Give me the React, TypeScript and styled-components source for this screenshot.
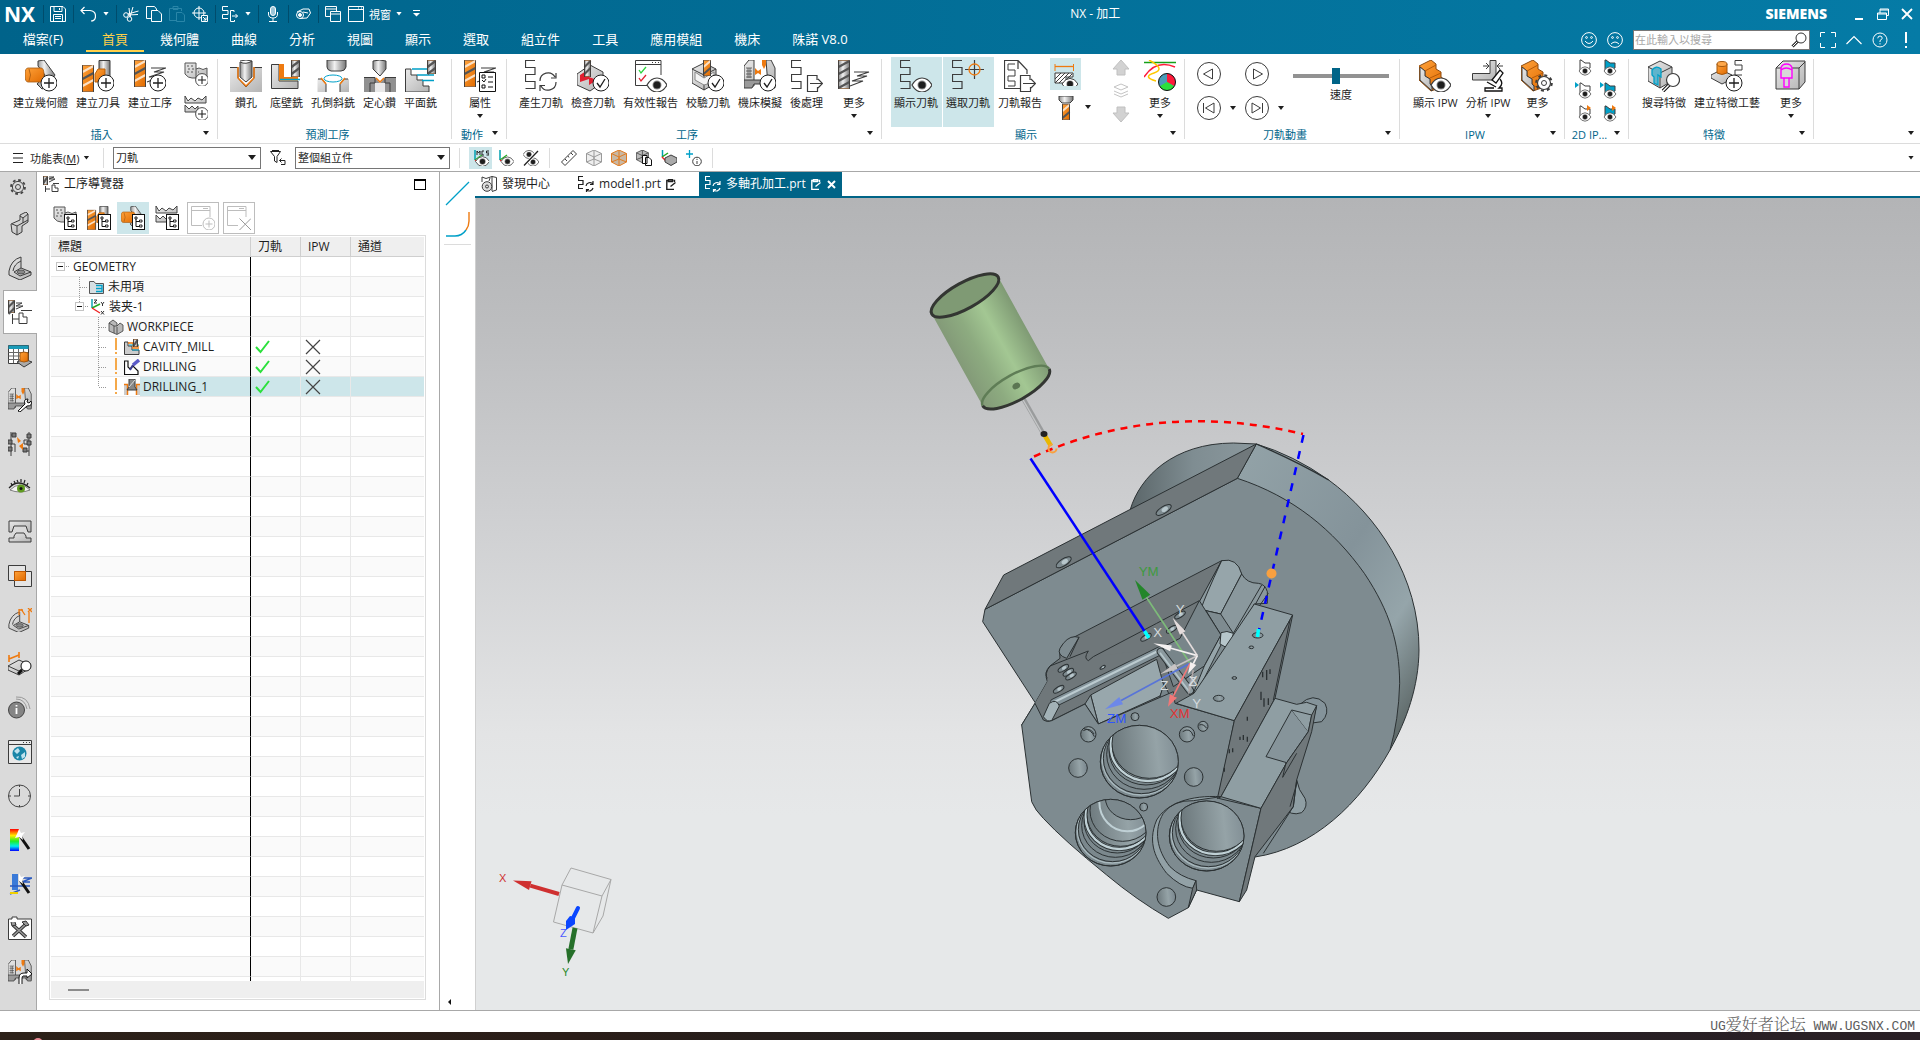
import React from 'react';
import styled, { createGlobalStyle, css } from 'styled-components';

const INK = '#3c3c3c';
const OR = '#ee7a10';
const CY = '#00a0c8';

const Global = createGlobalStyle`
  *, *::before, *::after { box-sizing: border-box; }
  html, body, #root { height: 100%; }
  body { margin: 0; overflow: hidden; background: #fff; }
  body, button, input, select, table {
    font-family: "Open Sans", "Noto Sans CJK TC", "Noto Sans", sans-serif;
    font-size: 12px; color: #1e1e1e;
  }
  button { border: 0; padding: 0; background: none; cursor: default; white-space: nowrap; }
  svg { display: block; flex: none; }
  h1, h2 { margin: 0; font-weight: 400; }
`;

/* ---------- shared drawing parts ---------- */
const Defs = styled.svg`position: absolute; width: 0; height: 0;`;

const Gradients = () => (
  <Defs aria-hidden="true">
    <defs>
      <linearGradient id="gOr" x1="0" x2="1" y1="0" y2="1"><stop offset="0" stopColor="#ffa23a" /><stop offset="1" stopColor="#e06a00" /></linearGradient>
      <linearGradient id="gGr" x1="0" x2="1" y1="0" y2="1"><stop offset="0" stopColor="#e9e9e9" /><stop offset="1" stopColor="#b4b4b4" /></linearGradient>
      <linearGradient id="gMe" x1="0" x2="1"><stop offset="0" stopColor="#8d8d8d" /><stop offset=".4" stopColor="#f2f2f2" /><stop offset="1" stopColor="#767676" /></linearGradient>
      <linearGradient id="gRain" x1="0" x2="0" y1="0" y2="1"><stop offset="0" stopColor="#f00" /><stop offset=".3" stopColor="#fe0" /><stop offset=".55" stopColor="#2e2" /><stop offset=".78" stopColor="#0ee" /><stop offset="1" stopColor="#00f" /></linearGradient>
    </defs>
  </Defs>
);

type P = { x?: number; y?: number; s?: number };
const At = ({ x = 0, y = 0, s = 1, children }: P & { children: React.ReactNode }) => (
  <g transform={`translate(${x} ${y}) scale(${s})`}>{children}</g>
);
const Plus = (p: P) => <At {...p}><circle r="8" fill="#fff" stroke="#1e1e1e" /><path d="M-5 0H5M0 -5V5" stroke="#1e1e1e" strokeWidth="1.3" /></At>;
const Check = (p: P) => <At {...p}><circle r="8" fill="#fff" stroke="#1e1e1e" /><path d="M-4 0L-1 4L4 -4" fill="none" stroke="#1e1e1e" strokeWidth="1.3" /></At>;
const Eye = (p: P) => <At {...p}><path d="M-10 0Q-6 -7 0 -7T10 0Q6 7 0 7T-10 0Z" fill="#fff" stroke={INK} strokeWidth="1.2" /><circle r="4.5" fill="#8a8a8a" /><circle r="3.6" fill="#1e1e1e" /></At>;
const Tree = (p: P) => <At {...p}><rect width="12" height="15" fill="#fff" stroke="#111" /><path d="M3.5 4V12H7M3.5 7H7" fill="none" stroke="#111" /><path d="M2.500 2.500h2v2h-2zM7 5.500h2.500v2h-2.500zM7 10.500h2.500v2h-2.500z" fill="#fff" stroke="#111" strokeWidth=".9" /></At>;
const Zig = (p: P) => <At {...p}><path d="M10 .5H.5V7.500H10V14.500H.5V21.500H10V28.500H.5" fill="none" stroke={INK} strokeWidth="1.2" /></At>;
const Mill = ({ w = 12, h = 27, c = 'url(#gOr)', lc = '#fbe0c4', ...p }: P & { w?: number; h?: number; c?: string; lc?: string }) => (
  <At {...p}>
    <rect x=".5" y=".5" width={w - 1} height={h - 1} fill={c} stroke="#7b4a20" strokeWidth=".7" />
    {Array.from({ length: Math.floor((h - w * 0.6) / 7) + 1 }, (_, i) => (
      <path key={i} d={`M.5 ${7 + i * 7}L${w - 0.5} ${1 + i * 7}`} stroke={i % 2 ? '#555' : lc} strokeWidth="2.200" />
    ))}
    <path d={`M.5 .5V${h}M${w - 0.5} .5V${h}`} stroke={INK} strokeWidth=".9" />
  </At>
);
const GMill = (p: P & { w?: number; h?: number }) => <Mill {...p} c="url(#gMe)" lc="#555" />;
const Swoosh = (p: P) => <At {...p}><path d="M4 1H19L7 5H17L2 10H13L0 15" fill="none" stroke={INK} strokeWidth="1.100" /></At>;
const Refresh = (p: P) => <At {...p}><path d="M0 8A8 8 0 0 1 15 4M16 0V5H11M16 9A8 8 0 0 1 1 13M0 18V12.500H5" fill="none" stroke={INK} strokeWidth="1.200" /></At>;
const Export = (p: P) => <At {...p}><path d="M10 5V.5H.5V16.500H10.500V12M3 8.500H15M11 4L15.500 8.500L11 13" fill="none" stroke={INK} strokeWidth="1.200" /></At>;
const Cube = ({ f = 'url(#gGr)', ...p }: P & { f?: string }) => (
  <At {...p}><path d="M12 0L24 6V20L12 27L0 20V6Z" fill={f} stroke={INK} /><path d="M0 6L12 12L24 6M12 12V27" fill="none" stroke={INK} /></At>
);
const Steps = () => (
  <g strokeLinejoin="round"><path d="M0 6L12 0L17 4V9L22 12V17L26 20V26L12 31L0 20Z" fill="url(#gOr)" stroke="#8a4b12" /><path d="M0 6L6 11V16L11 19V24L15 27M6 11L17 5M11 18L22 13M0 6V19L13 31" fill="none" stroke="#b45a08" /><path d="M1 7L6 11V16L11 19V24L13 26V31L1 20Z" fill="url(#gGr)" stroke={INK} /></g>
);
const Machine = (
  <g><path d="M0 26V6L5 0H10V26ZM22 0H27L31 8V26H24Z" fill="url(#gGr)" stroke={INK} /><path d="M0 20H31V28H26L24 24H10L8 28H0Z" fill="#9a9a9a" stroke={INK} /><path d="M2 8H8M2 11H8M2 14H8M2 17H8M4 8V18M6 8V18" stroke={INK} strokeWidth=".7" /><path d="M11 8L14 11L17 9V15L14 13L11 15ZM18 0H22V5L20 9L18 5Z" fill={OR} /></g>
);
const Cyl = (
  <g><path d="M13 1L19 0L30 15L23 26L17 29L12 24L20 15L13 6Z" fill="url(#gMe)" stroke={INK} /><path d="M3 8H16Q19 8 19 15T16 22H3Q0 22 0 15T3 8Z" fill="url(#gOr)" stroke="#a3580f" strokeWidth=".8" /><path d="M4 9Q7 15 4 21" fill="none" stroke="#a3580f" strokeWidth=".8" /></g>
);
const ToolSet = <g><Mill y={5} w={12} h={27} /><path d="M17 .5H28V16H17Z" fill="url(#gMe)" stroke={INK} /><path d="M13 14L16 9H23V18H18V22H13Z" fill="url(#gOr)" stroke="#b8600a" /></g>;
const Blocks = <g><path d="M1 1H12V7L15 6Q19 9 23 6V19Q19 21 15 18L12 16H8Q4 16 1 12Z" fill="url(#gGr)" stroke="#555" /><path d="M12 7V17M3 4H5M7 4H9M4 7H6M8 7H10M3 10H5M7 10H9M14 10H15" stroke="#555" /></g>;
const Waves = <g><path d="M1 0V7H22V0L18 4L14 2L11 5L7 2L4 5ZM1 9V16H14V10L11 13L8 10L5 13Z" fill="url(#gGr)" stroke="#444" /></g>;
const Bracket = <g><path d="M1 15Q3 4 13 1V12L23 16V19L12 24L1 19Z" fill="url(#gGr)" stroke={INK} /><path d="M13 12L6 16L12 20L23 16M5 15Q6 8 13 5" fill="none" stroke={INK} /><ellipse cx="13" cy="16" rx="4" ry="2" fill="#888" stroke={INK} strokeWidth=".7" /></g>;
const Hex = ({ c = '#999', fill = '#eee' }) => <g><path d="M8 0L15.500 3.500V12L8 16L.5 12V3.500Z" fill={fill} stroke={c} /><path d="M.5 3.500L8 7L15.500 3.500M8 7V16M8 0V9M.5 12L8 9L15.500 12" fill="none" stroke={c} /></g>;
const Csys = <path d="M2 0V10" stroke="#00a0b0" strokeWidth="1.500" />;
const Cone = ({ c = '#fff', t, ...p }: P & { c?: string; t?: string }) => (
  <At {...p}><path d="M5 1V12H9L15 9V4H10L6 1Z" fill={c} stroke={INK} />{t === 'l' && <path d="M0 0L4 3L0 6Z" fill={CY} />}{t === 'r' && <path d="M12 0L16 3L12 6Z" fill={OR} />}<Eye x={10} y={12} s={0.6} /></At>
);

const art: Record<string, React.ReactNode> = {
  geometry: <>{Cyl}<Plus x={24} y={23} /></>,
  tool: <>{ToolSet}<Plus x={24} y={23} /></>,
  operation: <><Mill w={12} h={27} /><Swoosh x={13} y={7} /><Plus x={24} y={23} /></>,
  drill: <><path d="M0 7.500H32V32H0Z" fill="url(#gGr)" /><path d="M9 7V18L16 26L23 18V7Z" fill="#fff" /><path d="M.0 7.500H8V18L16 27L24 18V7.500H32" fill="none" stroke={INK} /><path d="M8 7V18L16 26L24 18V7" fill="none" stroke={OR} strokeWidth="1.500" /><path d="M10 2Q16 5 22 1V17L16 22L10 17Z" fill="url(#gMe)" stroke={INK} /><path d="M10 1Q16 -1 22 1" stroke={INK} fill="none" /></>,
  floor: <><path d="M.5 4.500H8V21H27V28.500H.5Z" fill="url(#gGr)" stroke={INK} /><path d="M8 4H13V17H27V20.500H8Z" fill={OR} /><path d="M9 19.500H29" stroke={CY} strokeWidth="1.500" /><GMill x={20} w={9} h={17} /></>,
  chamfer: <><path d="M10 0H29V7Q28 11 24 11H14Q10 10 10 7Z" fill="url(#gMe)" stroke={INK} /><path d="M.5 19H6L9 24V32H.5ZM32 19H26L23 24V32H32Z" fill="url(#gGr)" /><path d="M1 19H5L9 24V32M31 19H27L23 24V32" fill="none" stroke={INK} /><path d="M4 18L9 24M28 18L23 24" stroke={OR} strokeWidth="1.500" /><ellipse cx="16" cy="18.500" rx="9" ry="3.500" fill="#fff" stroke={CY} /></>,
  spot: <><path d="M0 17.500H11L16 23L21 17.500H32V32H21V23H11V32H0Z" fill="#909090" /><path d="M11 23H21V32H11Z" fill="#e8e8e8" /><path d="M0 17.500H11V23H6V32M32 17.500H21V23H26V32" fill="none" stroke={INK} /><path d="M12 18L16 22L20 18" fill="none" stroke={OR} strokeWidth="1.500" /><path d="M9 1Q16 -1 22 1V9L16 16L9 9Z" fill="url(#gMe)" stroke={INK} /></>,
  face: <><path d="M.5 9H6V15H12V20H18V26H24V32H.5Z" fill="url(#gGr)" stroke={INK} /><path d="M7 9H24M12 15H29M17 20.500H29" stroke={CY} strokeWidth="1.400" /><GMill x={22} w={9} h={14} /></>,
  props: <><Mill w={12} h={27} /><Swoosh x={13} y={7} /><path d="M15.500 12.500H31.500V31.500H15.500Z" fill="#fff" stroke="#111" /><path d="M18 15H21V18H18ZM18 20L20 22L22 19M18 25H21V28H18ZM24 17H29M24 22H29M24 27H29" fill="none" stroke="#111" /></>,
  generate: <><Zig /><Refresh x={15} y={13} /></>,
  inspect: <><path d="M0 14L13 5L26 12V22L13 31L0 25Z" fill="url(#gGr)" stroke={INK} /><path d="M3 15L12 9V17L20 20L12 25V19L3 22Z" fill="#e02030" /><GMill x={7} w={7} h={17} /><Check x={24} y={23} /></>,
  report: <><path d="M26 15V.5H.5V25.500H12M.5 4.500H26" fill="none" stroke={INK} /><path d="M17 2.500H18M20 2.500H21M23 2.500H24" stroke={INK} /><path d="M4 10L6 13L11 7" fill="none" stroke="#2bd63c" strokeWidth="1.300" /><path d="M4 18L6 21L11 15" fill="none" stroke="#e02030" strokeWidth="1.300" /><Eye x={22} y={25} /></>,
  verify: <><Cube x={0} y={3} /><path d="M3 12L12 18L22 12V22L12 25L3 20Z" fill="#f4f4f4" stroke="#888" /><Mill x={11} w={8} h={16} /><Check x={24} y={23} /></>,
  simulate: <>{Machine}<Check x={24} y={23} /></>,
  post: <><Zig /><Export x={16} y={15} /></>,
  moreOp: <><GMill w={12} h={29} /><Swoosh x={12} y={11} /></>,
  showPath: <><Zig /><Eye x={22} y={25} /></>,
  pickPath: <><Zig /><path d="M22.500 0V19M13 9.500H32" stroke={INK} strokeWidth="1.200" /><circle cx="22.500" cy="9.500" r="5.500" fill="none" stroke={OR} strokeWidth="1.300" /></>,
  pathReport: <><path d="M14 .5H.5V28.500H16M14 .5L23 10V14M14 .5V9" fill="none" stroke={INK} strokeWidth="1.200" /><path d="M11 4H4V10H11V16H4V21H11V26H4" fill="none" stroke={INK} /><Export x={16} y={15} /></>,
  moreView: <><path d="M0 2.500H32" stroke="#16a018" strokeWidth="1.500" /><path d="M0 17Q12 -1 31 7" fill="none" stroke="#ff1a3a" strokeWidth="1.500" /><path d="M5 0Q22 9 10 13T12 21" fill="none" stroke="#ffc800" strokeWidth="1.500" /><circle cx="23" cy="22" r="8.500" fill="#4a9cb8" /><path d="M23 22V13.500A8.500 8.500 0 0 1 30.400 26.200Z" fill="#ff1a3a" /><path d="M23 22L30.400 26.200A8.500 8.500 0 0 1 15.600 26.200Z" fill="#2be03c" /><circle cx="23" cy="22" r="8.500" fill="none" stroke="#111" /></>,
  showIpw: <><Steps /><Eye x={22} y={25} /></>,
  anaIpw: <><path d="M.5 13.500H18V.5H24V20H.5Z" fill="url(#gGr)" stroke={INK} /><path d="M11 6H17M14 3L17 6L14 9M31 6H25M28 3L25 6L28 9" fill="none" stroke={INK} /><path d="M20 20L28 10L31 13L24 23Z" fill="#fff" stroke="#111" strokeWidth="1.300" /><path d="M28 19Q32 24 27 28H30V31H13V28H22M15 22L24 27" fill="none" stroke="#111" strokeWidth="1.300" /></>,
  moreIpw: <><Steps /><At x={23} y={23}><circle r="6.500" fill="#fff" stroke={INK} strokeWidth="1.200" /><circle r="7.800" fill="none" stroke={INK} strokeWidth="2" strokeDasharray="3 3.130" /><circle r="2.500" fill="#fff" stroke={INK} /></At></>,
  findFeat: <><Cube x={0} y={1} /><path d="M4 10Q8 5 13 9V17L10 15V25L6 23V17L4 15Z" fill="#5fb4cc" stroke={CY} strokeWidth="1.300" /><path d="M21 25L15 31" stroke="#111" strokeWidth="3.500" /><path d="M21 25L15 31" stroke="#fff" strokeWidth="1.500" /><circle cx="25" cy="20" r="6.500" fill="#fff" stroke={INK} strokeWidth="1.200" /></>,
  makeFeat: <><path d="M0 15L10 10L21 15V19L11 24L0 18Z" fill="url(#gGr)" stroke={INK} /><path d="M6 4V13Q11 16 16 13V4Z" fill="url(#gOr)" stroke="#a3580f" /><ellipse cx="11" cy="4" rx="5" ry="2.500" fill="#ffa84a" stroke="#a3580f" /><path d="M31 .5H24V5H31V10H24V15H31" fill="none" stroke={INK} /><Plus x={23} y={23} /></>,
  moreFeat: <><path d="M1 8L8 1H30V22L24 29H1Z" fill="url(#gGr)" stroke={INK} /><path d="M1 8H24V29M24 8L30 2" fill="none" stroke={INK} /><path d="M6 8Q7 4 11.500 4T17 8V18H14V27H9V18H6ZM6 10Q11 6 17 10M9 18H14" fill="#d8d8d8" stroke="#f0f" strokeWidth="1.400" /></>,
  blocksPlus: <>{Blocks}<Plus x={18} y={18} s={0.8} /></>,
  wavesPlus: <>{Waves}<Plus x={18} y={18} s={0.8} /></>,
  blocksTree: <>{Blocks}<Tree x={11.5} y={8.5} /></>,
  toolTree: <><g transform="scale(.75)">{ToolSet}</g><Tree x={11.5} y={8.5} /></>,
  geomTree: <><g transform="scale(.75)">{Cyl}</g><Tree x={11.5} y={8.5} /></>,
  wavesTree: <>{Waves}<Tree x={11.5} y={8.5} /></>,
  winPlus: <g fill="none" stroke="#bdbdbd"><path d="M19 11V.5H.5V19.500H11M.5 4.500H19M12 2.500H17" /><circle cx="18" cy="18" r="6" /><path d="M14.500 18H21.500M18 14.500V21.500" /></g>,
  winX: <g fill="none" stroke="#bdbdbd"><path d="M19 11V.5H.5V19.500H11M.5 4.500H19M12 2.500H17" /><path d="M12.500 12.500L24 24M24 12.500L12.500 24" stroke="#999" /></g>,
  blank: <><path d="M1 4.500H19" stroke={OR} strokeWidth="1.300" /><path d="M1 2V9M19.500 2V9" stroke={OR} /><path d="M1 11H19V15H12V21H1Z" fill="#fff" stroke={INK} /><path d="M1 17L7 11M1 21L11 11M5 21L15 11M9 21L18 12" stroke={INK} /><Eye x={16} y={22} s={0.8} /></>,
  holder: <><path d="M5 0H19V4L16 7H8L5 4Z" fill="url(#gMe)" stroke={INK} /><Mill x={8} y={8} w={8} h={16} /></>,
  up: <path d="M12 0L20 9H16V15H8V9H4Z" fill="#d2d2d2" stroke="#c0c0c0" />,
  down: <path d="M12 16L20 7H16V1H8V7H4Z" fill="#d2d2d2" stroke="#c0c0c0" />,
  layers: <g fill="none" stroke="#c4c4c4"><path d="M5 4L12 1L19 4L12 7ZM5 8L12 11L19 8M5 11L12 14L19 11" /></g>,
  gear: <g fill="none" stroke="#444"><circle cx="8" cy="8" r="2.500" /><circle cx="8" cy="8" r="5.600" /><circle cx="8" cy="8" r="7" strokeWidth="1.800" strokeDasharray="2.750 2.750" /></g>,
  parts: <><path d="M3 12L12 8V3L18 0L20 2V10L14 14V20L9 23L4 20Z" fill="url(#gGr)" stroke={INK} /><path d="M4 12L9 14L20 8M9 14V23M12 4L15 6L20 2M15 6V11" fill="none" stroke={INK} /></>,
  bracket: Bracket,
  opNav: <><GMill w={7} h={13} /><path d="M8 3H14L8 6H15L8 9" fill="none" stroke={INK} /><path d="M4.500 14V24M4.500 19H11M11 23.500V13H15V17H19V23.500ZM13 10.500H24" fill="none" stroke={INK} /></>,
  opNav16: <><GMill w={5} h={9} /><path d="M6 1H11L6 3H12L6 6M2.500 10V16M2.500 13H7M9 15.500V9H12V12H15V15.500ZM10 7.500H16" fill="none" stroke={INK} /></>,
  grid: <><path d="M.5 1.500H20.500V19.500H.5Z" fill="#fff" stroke={INK} /><path d="M.5 1.500H20.500V5H.5Z" fill="#1a9bb8" /><path d="M.5 8.500H20M.5 12H20M.5 15.500H20M5.500 5V19M10.500 5V19M15.500 5V19" stroke="#666" /><path d="M9 18L16 15L24 18L16 23Z" fill="#aaa" stroke={INK} /><path d="M12 9V17Q16 19 20 17V9Q16 7 12 9" fill="url(#gOr)" stroke="#a3580f" /></>,
  machTool: <><g transform="scale(.75)">{Machine}</g><path d="M10 23L17 16Q15 11 20 11L19 14L21 15L23 13Q25 18 19 18L12 24Z" fill="#fff" stroke="#111" /></>,
  nodes: <><path d="M3 0V24M3 3H6M3 12H7V20M21 0V24M21 8H16V12H21M21 19H18" fill="none" stroke={INK} /><path d="M4 1H8V5H4ZM0 8H4V12H0ZM0 15H4V19H0ZM19 2H23V6H19ZM19 9H23V13H19ZM15 16H19V20H15Z" fill="#777" stroke={INK} /><path d="M9 5L13 9L10 11ZM15 18L11 14L15 11Z" fill={OR} /></>,
  realEye: <><path d="M2 14Q12 4 22 14Q12 18 2 14Z" fill="#f4f4f4" stroke="#555" strokeWidth=".7" /><circle cx="13" cy="12.500" r="4" fill="#5f9a20" /><circle cx="13" cy="12.500" r="1.500" fill="#111" /><path d="M1 12Q10 2 22 12M4 9L3 7M7 7L6 5M10 6L9 4M13 6V3M16 7L17 4M19 9L20 7" fill="none" stroke="#222" strokeWidth="1.200" /></>,
  die: <g stroke={INK}><path d="M1 1H23V12H20L18 6H6L4 12H1Z" fill="url(#gGr)" /><path d="M6 16L8 13H16L18 16V18H23V22H1V18H6Z" fill="url(#gGr)" /></g>,
  overlap: <><path d="M.5 1.500H17.500V16.500H.5ZM6.500 7.500H23.500V22.500H6.500Z" fill="#e4e4e4" stroke={INK} /><path d="M6.500 7.500H17.500V16.500H6.500Z" fill="url(#gOr)" stroke="#c05800" /></>,
  pmi: <><g transform="translate(0 3) scale(.9)">{Bracket}</g><path d="M11 1V7M11 2H15M13 1L17 7M21 4V15M20 0L24 4M24 0L20 4" stroke={OR} strokeWidth="1.300" /></>,
  measure: <><path d="M0 14L11 8L22 13V16L11 23L0 18Z" fill="url(#gGr)" stroke={INK} /><path d="M0 14L11 19L22 13" fill="none" stroke={INK} /><path d="M1 7L11 3M1 3V10M11 0V6" stroke={OR} strokeWidth="1.600" /><path d="M14 18L10 22" stroke="#111" strokeWidth="3" /><circle cx="18" cy="14" r="5" fill="#fff" stroke="#111" /></>,
  info: <><circle cx="8.500" cy="14" r="8" fill="#858585" stroke="#444" /><path d="M8.500 12V18M8.500 9V10.500" stroke="#fff" strokeWidth="1.800" /><path d="M8 3Q17 3 19 13M8 1Q20 0 22 13" fill="none" stroke="#999" /></>,
  web: <><path d="M.5 .5H23.500V23.500H.5Z" fill="#e9e9e9" stroke={INK} /><path d="M.5 4.500H23.500M15 2.500H16M18 2.500H19M21 2.500H22" stroke={INK} /><circle cx="11.500" cy="13.500" r="7" fill="#1a86a8" /><path d="M6 11L10 8L12 11L9 14ZM13 15L17 12V17L14 19ZM8 17L11 16L10 19Z" fill="#bfe2ee" /></>,
  clock: <g fill="none" stroke="#444"><circle cx="11.500" cy="12" r="11" /><path d="M11.500 5V12H6M11.500 1V3M11.500 21V23M.5 12H3M20 12H22" /></g>,
  rainbow: <><rect x="2" y="1" width="9" height="22" fill="url(#gRain)" /><path d="M12 8L21 21" stroke="#111" strokeWidth="3" /><path d="M11 1L13 5L17 4L14 8L15 12L11 9L7 10L9 6Z" fill="#fff" /></>,
  wand: <><path d="M4 2H10V18H4Z" fill="#3a7ad8" /><path d="M2 22L12 18M2 14H22M12 6H24L14 10H22" stroke="#2a5ac0" strokeWidth="1.400" fill="none" /><path d="M2 21H10" stroke="#f0d000" strokeWidth="2" /><path d="M12 8L21 21" stroke="#111" strokeWidth="3" /><path d="M11 1L13 5L17 4L14 8L15 12L11 9Z" fill="#fff" /></>,
  toolbox: <><path d="M.5 3H4V1H9V3H23.500V23.500H.5Z" fill="#fff" stroke={INK} /><path d="M5 20L18 8M5 9L18 21" stroke="#333" strokeWidth="3.500" /><path d="M5 20L18 8M5 9L18 21" stroke="#999" strokeWidth="1.600" /><path d="M14 6L18 5L21 9L18 10ZM3 6L4 10L8 9L7 6" fill="#999" stroke="#333" /></>,
  machOut: <><g transform="scale(.75)">{Machine}</g><path d="M11 24V18Q11 13 16 13H19V9L24 14L19 18V16H15Q14 16 14 19V24" fill="#fff" stroke="#111" /></>,
  save: <path d="M.5 .5H13L15.500 3V15.500H.5ZM4 .5V5.500H12V.5M9.500 2V4M3.500 15V8.500H12.500V15M5 10.500H11M5 12.500H11" fill="none" stroke="#fff" />,
  undo: <path d="M4.500 1L1 4.500L4.500 8M1 4.500H10Q15.500 5 15.500 10T11 15" fill="none" stroke="#fff" strokeWidth="1.200" />,
  cut: <g fill="none" stroke="#fff"><circle cx="3" cy="9" r="2.300" /><circle cx="6.500" cy="13" r="2.300" /><path d="M5 8L15.500 5M5 9L15 8.500M7 11L10 1M7 11L6 2" /></g>,
  copy: <g fill="#04688f" stroke="#fff"><path d="M.5 .5H8.500L10.500 3V12.500H.5Z" /><path d="M5.500 4.500H12L15.500 8V15.500H5.500Z" /></g>,
  paste: <g fill="none" stroke="#2a86a8"><path d="M7 14.500H.5V2.500H12.500V5M4 2.500V.5H9V3.500H4M7.500 6.500H13L15.500 9V15.500H7.500Z" /></g>,
  target: <g fill="none" stroke="#fff"><circle cx="7" cy="7" r="5" /><path d="M7 0V14M0 7H14" /><path d="M9.500 9.500H15.500V15.500H9.500Z" fill="#04688f" /><path d="M11 11L14 14M14 11.500V14H11.500" /></g>,
  exportS: <path d="M6 .5H.5V4.500H6V8.500H.5V12.500H6M12 6V4.500H8.500V15.500H12.500V14M10 10H15.500M13.500 8L15.500 10L13.500 12" fill="none" stroke="#fff" />,
  mic: <g fill="none" stroke="#fff"><rect x="5.500" y=".5" width="5" height="9" rx="2.500" fill="#9cc6d8" /><path d="M3.500 6V8Q3.500 12 8 12T12.500 8V6M8 12V15.500M4 15.500H12" /></g>,
  touch: <g fill="none" stroke="#fff"><circle cx="5" cy="9" r="3.500" /><circle cx="5" cy="9" r="1.500" fill="#fff" /><path d="M2 6L8 3H14L15.500 7L12 12L5 12.500M8 6L13 7" /></g>,
  windows: <g fill="#04688f" stroke="#fff"><path d="M.5 .5H11.500V10.500H.5Z" /><path d="M5.500 5.500H15.500V15.500H5.500ZM5.500 8H15.500M.5 3H11" /></g>,
  window: <path d="M.5 .5H15.500V15.500H.5ZM.5 3.500H15.500M10 2H11M13 2H14" fill="none" stroke="#fff" />,
  custom: <><path d="M4 4.500H11" stroke="#fff" /><path d="M4 7H11L7.500 10.500Z" fill="#fff" /></>,
  smile: <g fill="none" stroke="#fff"><circle cx="8" cy="8" r="7.400" /><path d="M4 9Q8 14 12 9" /><circle cx="5.500" cy="5.500" r=".9" /><circle cx="10.500" cy="5.500" r=".9" /></g>,
  sad: <g fill="none" stroke="#fff"><circle cx="8" cy="8" r="7.400" /><path d="M4 12Q8 8 12 12" /><circle cx="5.500" cy="5.500" r=".9" /><circle cx="10.500" cy="5.500" r=".9" /></g>,
  search: <><path d="M7 9L1.500 14.500" stroke="#333" strokeWidth="3" /><path d="M7 9L1.500 14.500" stroke="#fff" /><circle cx="10" cy="6" r="5" fill="#fff" stroke="#333" /></>,
  full: <path d="M.5 5V.5H5M11 .5H15.500V5M15.500 11V15.500H11M5 15.500H.5V11" fill="none" stroke="#fff" />,
  chevron: <path d="M.5 12L8 4.500L15.500 12" fill="none" stroke="#fff" strokeWidth="1.200" />,
  help: <><circle cx="8" cy="8" r="7" fill="none" stroke="#fff" /><path d="M5.800 6.300Q5.800 4 8 4T10.200 6.200Q10 7.500 8 8.500V10M8 11.200V12.400" fill="none" stroke="#fff" /></>,
  bang: <path d="M8 0V11M8 14V16" stroke="#fff" strokeWidth="2" />,
  min: <path d="M4 13H12" stroke="#fff" strokeWidth="2" />,
  restore: <path d="M2.500 7H11.500V13.500H2.500ZM5 7V3H13.500V9.500H11.500M2.500 8H11M5 4H13" fill="none" stroke="#fff" />,
  close: <path d="M3 3L13 13M13 3L3 13" stroke="#fff" strokeWidth="1.800" />,
  menu: <path d="M3 3.500H13M3 8H13M3 12.500H13" stroke="#222" />,
  filter: <g fill="none" stroke="#222"><path d="M.5 1.500H10.500L7 6.500V12.500L4.500 11V6.500ZM2 .5H9" /><path d="M9.500 10.500H15V14.500H11M11.500 8.500L9.500 10.500L11.500 12.500" /></g>,
  mcs: <>{Csys}<path d="M2 10L9 5" stroke="#2a2" strokeWidth="1.300" /><path d="M2 10L7 13" stroke="#e22" strokeWidth="1.300" /><path d="M4 5V1L5.500 3L7 1V5M11 1H9V5H11M16 1H13.500V3H16V5H13.500" fill="none" stroke="#222" /><Eye x={9.5} y={11.5} s={0.7} /></>,
  csysEye: <>{Csys}<path d="M2 10L9 5" stroke="#2a2" strokeWidth="1.300" /><path d="M2 10L7 13" stroke="#e22" strokeWidth="1.300" /><Eye x={9.5} y={11.5} s={0.65} /></>,
  noEye: <><Eye x={6} y={4.5} s={0.6} /><Eye x={10} y={12} s={0.6} /><path d="M1 15.500L15 1" stroke="#fff" strokeWidth="3" /><path d="M1 15.500L15 1" stroke="#222" strokeWidth="1.300" /></>,
  ruler: <><path d="M.5 12L12 .5L15.500 4L4 15.500Z" fill="#fff" stroke={INK} /><path d="M4 9L6 11M7 6L8 7.500M10 3L12 5" stroke={INK} /></>,
  wire: <Hex />, orange: <Hex c="#e07a20" fill="#c9b8a4" />,
  stack: <><g transform="scale(.8)"><Hex c="#444" fill="#bbb" /></g><path d="M6.500 5.500H11V13.500H6.500ZM9.500 7.500H13L15.500 10V15.500H9.500Z" fill="#fff" stroke="#111" /></>,
  csysBox: <><path d="M1.500 0V7" stroke="#00a0b0" strokeWidth="1.500" /><path d="M1 7L7 3" stroke="#2a2" strokeWidth="1.500" /><path d="M1 7L5 11" stroke="#e22" strokeWidth="1.500" /><path d="M4 8L10 5L16 8V12L10 15.500L4 12Z" fill="#aaa" stroke={INK} /></>,
  plusInfo: <><path d="M3.500 0V8M0 4H7" stroke={CY} strokeWidth="1.300" /><circle cx="11" cy="11.500" r="4.300" fill="#fff" stroke={INK} /><path d="M11 11V14M11 8.800V10" stroke={INK} /></>,
  discover: <g fill="none" stroke={INK}><path d="M1 1L5 2.500L11 .5L15.500 1.500V14L11 15.500M11 .5V15M1 1V6" /><circle cx="6" cy="10.500" r="4.800" fill="#ddd" /><circle cx="6" cy="10.500" r="1.500" /><path d="M8 5L9 2" /></g>,
  setup: <path d="M5 .5H.5V4.500H5V8.500H.5V12.500H5M8 10A4 4 0 0 1 15 8M15 5V8.500H12M15 12A4 4 0 0 1 8.500 14M8.500 16V13.500H11" fill="none" stroke="currentColor" strokeWidth="1.200" />,
  edit: <path d="M7.500 1.500H8.500V3M8 10.500H.8V1.500H2M2.500 .8H6.500V2.500H2.500ZM4.500 7.500L9.500 3.500" fill="none" stroke="currentColor" strokeWidth="1.400" />,
  x: <path d="M1 1L8 8M8 1L1 8" stroke="#fff" strokeWidth="2" />,
  folder: <><path d="M.5 2.500H5L6.500 4.500H14.500V14.500H.5Z" fill="#d6dfe3" stroke="#555" /><path d="M7 6.500H13V9.500H7M7 12.500H13V9.500" fill="none" stroke={CY} strokeWidth="1.400" /></>,
  axis: <><path d="M2 0V9" stroke="#00a0b0" strokeWidth="1.400" /><path d="M2 9L10 5" stroke="#2a2" strokeWidth="1.400" /><path d="M2 9L10 14" stroke="#e22" strokeWidth="1.400" /><path d="M4 1H7L4 4H7M11 3L12.500 5L14 3M12.500 5V7M11 12L14 15.500M14 12L11 15.500" fill="none" stroke="#333" /></>,
  work: <><path d="M1 4L5 1L9 4V7L12 4L15 6V12L9 15.500L1 12Z" fill="#b8b8b8" stroke={INK} strokeWidth=".8" /><path d="M1 4L6 7V14M9 7L6 7M9 8V15" fill="none" stroke={INK} strokeWidth=".8" /></>,
  cavity: <><path d="M.5 3H4V7H8V11H15V15.500H.5Z" fill="#ccc" stroke={INK} /><path d="M4 4H9V7H15M8 9H15" stroke={OR} strokeWidth="1.500" fill="none" /><path d="M5 6H15M8 11H15" stroke={CY} /><GMill x={9} w={5} h={8} /></>,
  drilling: <><path d="M4 2H.5V15.500H14V12L9 7L6 10L4 8Z" fill="#fff" stroke="#111" strokeWidth="1.200" /><path d="M15 1L9 6" stroke="#5a5ac8" strokeWidth="3.500" /><path d="M9 6L6 11" stroke="#3a3a90" strokeWidth="2" /></>,
  drilling1: <><path d="M0 6H3V16H0ZM12 6H16V16H12Z" fill="#ccc" /><path d="M0 5.500H3.500V16M16 5.500H12.500V16" fill="none" stroke={OR} strokeWidth="1.500" /><path d="M5 0H11V8L13 11H3L5 8Z" fill="#888" stroke={INK} /><path d="M5 8L11 1" stroke="#ddd" /></>,
  tick: <path d="M1 8L5.500 13L14 2" fill="none" stroke="#2be03c" strokeWidth="2" />,
  cross: <path d="M1 1L15 15M15 1L1 15" fill="none" stroke="#444" strokeWidth="1.200" />,
};

const Icon = ({ n, s = 16 }: { n: string; s?: number }) => (
  <svg width={s} height={s} viewBox={`0 0 ${s} ${s}`} aria-hidden="true">{art[n]}</svg>
);

const Tri = styled.span<{ $c?: string }>`
  flex: none; width: 6px; height: 4px;
  background: ${p => p.$c || '#1e1e1e'};
  clip-path: polygon(0 0, 100% 0, 50% 100%);
`;

/* ---------- header ---------- */
const Page = styled.div`display: flex; flex-direction: column; height: 100vh; background: #fff;`;
const Header = styled.header`background: linear-gradient(90deg, #00638a, #057ba6); color: #fff;`;
const TitleRow = styled.div`display: flex; align-items: center; height: 27px;`;
const Quick = styled.div`
  display: flex; align-items: center; gap: 7px; padding-left: 4px;
  > i { margin-right: -1px; }
`;
const Brand = styled.span`font: 700 21px/24px "Noto Sans", sans-serif; width: 32px;`;
const Sep = styled.i<{ $h?: number; $c?: string }>`flex: none; width: 1px; height: ${p => p.$h || 18}px; background: ${p => p.$c || '#004c6c'};`;
const Bare = styled.button`display: flex; align-items: center; gap: 7px; flex: none; color: inherit;`;
const WindowBtn = styled(Bare)`gap: 5px; font-size: 11px;`;
const AppTitle = styled.h1`flex: 1; text-align: center; font-size: 12px; line-height: 16px;`;
const Win = styled.div`display: flex; justify-content: flex-end; align-items: center; gap: 8px; padding-right: 5px;`;
const Siemens = styled.span`font: 800 14px/16px "Open Sans", sans-serif; margin-right: 16px;`;
const TabRow = styled.div`display: flex; align-items: center; height: 27px; padding-bottom: 2px;`;
const Tabs = styled.nav`display: flex; flex: 1; height: 25px;`;
const Tab = styled.button<{ $on?: boolean; $first?: boolean }>`
  padding: 0 16px; height: 25px; font-size: 13px; line-height: 22px; color: ${p => (p.$on ? '#ffcf4a' : '#fff')};
  border-bottom: 2px solid ${p => (p.$on ? '#ffcf4a' : 'transparent')};
  ${p => p.$first && css`width: 86px;`}
`;
const Tools = styled.div`display: flex; align-items: center; gap: 10px; padding-right: 6px;`;
const Search = styled.label`
  display: flex; align-items: center; width: 177px; height: 20px; padding-right: 2px;
  background: #fff; border: 1px solid #777;
  input { flex: 1; min-width: 0; border: 0; outline: 0; padding: 0 1px; font-size: 11px; background: none; }
  input::placeholder { color: #a8a8a8; opacity: 1; }
`;

/* ---------- ribbon ---------- */
const Ribbon = styled.section`display: flex; padding-top: 3px; border-bottom: 1px solid #dcdcdc;`;
const GroupBox = styled.div<{ $w: number }>`
  position: relative; display: flex; flex-direction: column; flex: 0 0 ${p => p.$w}px; height: 86px;
  &::after { content: ""; position: absolute; right: 0; top: 2px; width: 1px; height: 80px; background: #dcdcdc; }
`;
const Items = styled.div<{ $p?: number }>`display: flex; gap: 1px; height: 70px; padding-left: ${p => p.$p ?? 10}px;`;
const GroupFoot = styled.div`
  display: grid; grid-template-columns: 1fr 6px; align-items: center; height: 16px; padding-right: 9px;
  font-size: 11px; line-height: 16px; color: #00658b; white-space: nowrap; text-align: center;
  ${Tri} { margin-bottom: 4px; }
`;
const Big = styled.button<{ $on?: boolean }>`
  display: flex; flex-direction: column; align-items: center; flex: none; height: 70px; padding: 3px 4px 0 3px;
  min-width: 39px; font-size: 11px; line-height: 16px; background: ${p => (p.$on ? '#cde6ea' : 'none')};
  ${Tri} { margin-top: 3px; }
  svg { margin-bottom: 3px; }
`;
const Col = styled.div<{ $ml?: number; $gap?: number; $pt?: number; $end?: boolean }>`
  display: flex; flex-direction: column; align-items: center; gap: ${p => p.$gap ?? 10}px;
  padding-top: ${p => p.$pt ?? 5}px; margin-left: ${p => p.$ml ?? 0}px;
  ${p => p.$end && css`justify-content: flex-end; padding-bottom: 8px;`}
`;
const Small = styled.button<{ $on?: boolean; $h?: number; $w?: number }>`
  display: flex; align-items: center; justify-content: center; flex: none; width: ${p => p.$w ?? 31}px;
  height: ${p => p.$h ?? 24}px; background: ${p => (p.$on ? '#cde6ea' : 'none')};
`;
const PlayGrid = styled.div`
  display: grid; grid-template-columns: 24px 16px 24px 16px; column-gap: 4px; row-gap: 10px;
  align-content: start; align-items: center; padding: 5px 0 0 4px;
  button { display: flex; justify-content: center; }
`;
const Speed = styled.label`
  display: flex; flex-direction: column; align-items: center; gap: 3px; padding-top: 11px; margin-left: 3px;
  font-size: 11px; line-height: 16px;
  input { appearance: none; width: 96px; height: 16px; margin: 0; background: none; }
  input::-webkit-slider-runnable-track { height: 4px; background: #929292; }
  input::-webkit-slider-thumb { appearance: none; width: 8px; height: 16px; margin-top: -6px; background: #006487; }
`;
const IpwGrid = styled.div`display: grid; grid-template-columns: 16px 16px; column-gap: 9px; row-gap: 4px; padding: 2px 0 0 2px; align-content: start;`;

const Round = ({ d, label }: { d: string; label: string }) => (
  <button aria-label={label}><svg width="24" height="24" viewBox="0 0 24 24"><circle cx="12" cy="12" r="11.500" fill="#fff" stroke={INK} /><path d={d} fill="none" stroke={INK} /></svg></button>
);
const B = ({ n, t, d, on }: { n: string; t: string; d?: boolean; on?: boolean }) => (
  <Big $on={on}><Icon n={n} s={32} />{t}{d && <Tri />}</Big>
);
const Group = ({ w, t, p, drop = true, children }: { w: number; t: string; p?: number; drop?: boolean; children: React.ReactNode }) => (
  <GroupBox $w={w}><Items $p={p}>{children}</Items><GroupFoot><span>{t}</span>{drop && <Tri />}</GroupFoot></GroupBox>
);
const End = styled.div`flex: 1; display: flex; align-items: flex-end; justify-content: flex-end; padding: 0 6px 8px 0;`;

/* ---------- selection bar ---------- */
const Bar = styled.section`display: flex; align-items: center; gap: 9px; height: 28px; padding: 0 6px 0 10px; border-bottom: 1px solid #a8a8a8;`;
const MenuBtn = styled(Bare)`font-size: 11px; gap: 4px; width: 84px;`;
const Combo = styled.label<{ $w: number }>`
  display: grid; align-items: center; width: ${p => p.$w}px; flex: none;
  select { grid-area: 1 / 1; appearance: none; height: 22px; padding: 0 2px; border: 1px solid #767676; border-radius: 0; background: #fff; font-size: 11px; }
  ${Tri} { grid-area: 1 / 1; justify-self: end; margin-right: 5px; width: 8px; height: 5px; }
`;
const ToolBtn = styled(Bare)<{ $on?: boolean }>`
  justify-content: center; width: 23px; height: 22px; background: ${p => (p.$on ? '#cde6ea' : 'none')};
`;
const ToolSetRow = styled.div`
  display: flex; align-items: center; gap: 2px; flex: 1;
  > i { margin: 0 5px; }
`;

/* ---------- work area ---------- */
const Main = styled.main`display: flex; flex: 1; min-height: 0; border-bottom: 1px solid #a8a8a8;`;
const Rail = styled.nav`
  display: flex; flex-direction: column; flex: 0 0 37px; background: #dadada; border-right: 1px solid #a8a8a8; padding-left: 3px;
`;
const RailBtn = styled.button<{ $on?: boolean; $first?: boolean }>`
  display: flex; align-items: center; flex: none; height: ${p => (p.$first ? 30 : 44)}px; padding-left: ${p => (p.$first ? 7 : 5)}px;
  ${p => p.$on && css`background: #fff; border: 1px solid #a8a8a8; border-right: 0; margin-right: -1px; padding-left: 4px;`}
`;
const Navigator = styled.section`display: flex; flex-direction: column; flex: 0 0 403px; border-right: 1px solid #a8a8a8; padding: 0 13px 10px 12px;`;
const NavHead = styled.div`
  display: flex; align-items: center; gap: 5px; height: 29px; padding: 0 0 5px 0; margin-left: -6px;
  h2 { flex: 1; font-size: 12px; line-height: 16px; }
  button { width: 12px; height: 11px; border: 1px solid #000; border-top-width: 2px; }
`;
const NavTools = styled.div`display: flex; align-items: center; gap: 2px; height: 34px;`;
const NavBtn = styled.button<{ $on?: boolean; $box?: boolean }>`
  display: flex; align-items: center; justify-content: center; width: 32px; height: 32px;
  background: ${p => (p.$on ? '#cde6ea' : 'none')};
  ${p => p.$box && css`border: 1px solid #bdbdbd; margin-left: 2px;`}
`;
const TableBox = styled.div`flex: 1; min-height: 0; display: flex; flex-direction: column; border: 1px solid #dcdcdc; padding: 1px;`;
const Clip = styled.div`flex: 1; min-height: 0; overflow: hidden;`;
const Grid = styled.table`
  width: 100%; table-layout: fixed; border-collapse: separate; border-spacing: 0; line-height: 18px;
  th { height: 20px; padding: 0 7px; text-align: left; font-weight: 400; background: #efefef; border-right: 1px solid #cfcfcf; border-bottom: 1px solid #cfcfcf; }
  td { height: 20px; padding: 0 0 0 4px; border-bottom: 1px solid #e8e8e8; border-right: 1px solid #e8e8e8; }
  td:first-child { border-right: 1px solid #000; border-bottom-color: #e8e8e8; padding: 0; }
  th:last-child, td:last-child { border-right: 0; }
  tbody tr:nth-child(even) { background: #fafafa; }
`;
const NameCell = styled.div<{ $on?: boolean }>`
  display: flex; align-items: center; height: 19px; white-space: nowrap;
  span { flex: 1; padding-left: 3px; background: ${p => (p.$on ? '#cde6ea' : 'none')}; line-height: 19px; }
`;
const Cell = styled.td<{ $on?: boolean }>`background: ${p => (p.$on ? '#cde6ea' : 'none')};`;
const HScroll = styled.div`height: 17px; background: #efefef; padding: 8px 0 0 17px; i { display: block; width: 21px; height: 2px; background: #8c8c8c; }`;

const Strip = styled.aside`display: flex; flex-direction: column; align-items: center; flex: 0 0 35px; padding-top: 8px;`;
const StripSep = styled.i`width: 27px; height: 1px; background: #dcdcdc; margin-top: 7px;`;
const Back = styled.i`margin: auto auto 5px 8px; width: 3px; height: 6px; background: #111; clip-path: polygon(100% 0, 100% 100%, 0 50%);`;

const View = styled.section`display: flex; flex-direction: column; flex: 1; min-width: 0;`;
const DocTabs = styled.div`display: flex; height: 26px; border-bottom: 2px solid #006487;`;
const DocTab = styled.button<{ $on?: boolean }>`
  display: flex; align-items: center; gap: 5px; height: 24px; padding: 0 6px; margin-right: 16px; line-height: 16px;
  background: ${p => (p.$on ? '#006487' : 'none')}; color: ${p => (p.$on ? '#fff' : '#1e1e1e')};
`;
const Canvas = styled.div`
  position: relative; flex: 1; min-height: 0; border-left: 1px solid #d0d0d0; overflow: hidden;
  background: linear-gradient(#b3b4b6, #bcbdbf 15%, #cfd0d2 40%, #e3e4e5 66%, #e6e8e9 76%);
  > svg { width: 100%; height: 100%; }
`;
const Status = styled.footer`
  height: 21px; flex: none; text-align: right; padding: 5px 5px 0 0; color: #5c5c5c;
  font: 13px/16px "Liberation Mono", monospace; white-space: pre;
  span { font: 300 16px/16px "Noto Serif CJK SC", "Noto Sans CJK SC", serif; }
`;
const Taskbar = styled.div`
  position: relative; flex: none; height: 8px; padding: 6px 0 0 33px; overflow: hidden;
  background: linear-gradient(90deg, #2c2119, #2a1d18 30%, #221f1f 50%, #2a2026);
  i { display: block; width: 10px; height: 10px; border-radius: 50%; background: #e88a94; }
`;

const Bore = ({ cx, cy, rx, ry, id, deep }: { cx: number; cy: number; rx: number; ry: number; id: string; deep?: boolean }) => (
  <g stroke="#2b3133" strokeWidth="3" fill="none">
    <clipPath id={id}><ellipse cx={cx} cy={cy} rx={rx} ry={ry} /></clipPath>
    <ellipse cx={cx} cy={cy} rx={rx} ry={ry} fill="#7b888d" />
    <g clipPath={`url(#${id})`}>
      <ellipse cx={cx + 4} cy={cy - 7} rx={rx - 2} ry={ry - 2} stroke="#a9b9be" strokeWidth="4" />
      <ellipse cx={cx + 6} cy={cy - 10} rx={rx - 3} ry={ry - 3} />
      <ellipse cx={cx + 14} cy={cy - 22} rx={rx - 5} ry={ry - 4} />
      <ellipse cx={cx + 20} cy={cy - 34} rx={rx - 6} ry={ry - 5} />
      <ellipse cx={cx + 26} cy={cy - 46} rx={rx - 5} ry={ry - 5} strokeWidth="12" />
      <ellipse cx={cx + 26} cy={cy - 46} rx={rx - 5} ry={ry - 5} stroke="#bfd0d5" strokeWidth="7" />
      <ellipse cx={cx + 30} cy={cy - 54} rx={rx - 5} ry={ry - 5} fill="url(#bore)" />
      {deep && <>
        <ellipse cx={cx + 36} cy={cy - 66} rx={rx - 8} ry={ry - 8} />
        <ellipse cx={cx + 50} cy={cy - 92} rx={rx - 22} ry={ry - 12} stroke="#bfd0d5" strokeWidth="6" />
        <ellipse cx={cx + 60} cy={cy - 105} rx={rx - 30} ry={ry - 34} fill="#7b888d" />
      </>}
    </g>
    <ellipse cx={cx} cy={cy} rx={rx} ry={ry} />
  </g>
);
const Hole = ({ cx, cy, r, ry }: { cx: number; cy: number; r: number; ry?: number }) => <ellipse cx={cx} cy={cy} rx={r} ry={ry ?? r} fill="url(#bore)" />;
const Slot = ({ x, y, r = 18 }: { x: number; y: number; r?: number }) => (
  <g transform={`rotate(-32 ${x} ${y})`}><ellipse cx={x} cy={y} rx={r} ry={r * 0.4} fill="#7e8b90" /><ellipse cx={x + r * 0.15} cy={y} rx={r * 0.4} ry={r * 0.25} fill="#b7c6cb" stroke="none" /></g>
);
const Arrow = ({ x1, y1, x2, y2, c, c2, w = 5, h = 55, k = 13 }: { x1: number; y1: number; x2: number; y2: number; c: string; c2?: string; w?: number; h?: number; k?: number }) => {
  const L = Math.hypot(x2 - x1, y2 - y1), ux = (x2 - x1) / L, uy = (y2 - y1) / L;
  const bx = x2 - ux * h, by = y2 - uy * h;
  return <g stroke="none"><path d={`M${x1} ${y1}L${bx} ${by}`} stroke={c2 || c} strokeWidth={w} /><path d={`M${x2} ${y2}L${bx - uy * k} ${by + ux * k}L${bx + uy * k} ${by - ux * k}Z`} fill={c} /></g>;
};

const Model = () => (
  <svg viewBox="476 198 1444 812" preserveAspectRatio="xMidYMid slice" role="img" aria-label="model" fontFamily="Liberation Sans, sans-serif">
    <defs>
      <linearGradient id="bore" x1="0" x2="1" y1=".1" y2="0"><stop offset="0" stopColor="#6f7b7f" /><stop offset=".55" stopColor="#95a3a7" /><stop offset="1" stopColor="#75828a" /></linearGradient>
      <linearGradient id="lobe" x1="0" x2="1"><stop offset="0" stopColor="#5b6669" /><stop offset=".5" stopColor="#7f8d92" /><stop offset="1" stopColor="#8b989d" /></linearGradient>
      <linearGradient id="rim" x1="0" x2=".9" y1="0" y2="1"><stop offset="0" stopColor="#93a3a8" /><stop offset=".5" stopColor="#84939a" /><stop offset=".75" stopColor="#95a5aa" /><stop offset="1" stopColor="#56605f" /></linearGradient>
      <linearGradient id="green" x1="0" x2="1"><stop offset="0" stopColor="#839a78" /><stop offset=".3" stopColor="#8dab80" /><stop offset=".62" stopColor="#a3c793" /><stop offset="1" stopColor="#7f9a74" /></linearGradient>
    </defs>

    <g transform="translate(960 540) scale(.333333)" stroke="#2b3133" strokeWidth="3" strokeLinejoin="round">
      <path d="M511 -92C540 -190 640 -290 820 -291L889 -288L700 -100Z" fill="url(#lobe)" />
      <path d="M889 -288Q1000 -255 1106 -180C1250 -75 1378 110 1377 330C1376 440 1340 540 1290 630L1100 300L832 -185Z" fill="url(#rim)" />
      <path d="M889 -288Q1010 -236 1106 -180" fill="none" strokeWidth="4" />
      <path d="M832 -185C1000 -130 1120 -30 1213 100C1290 215 1318 310 1319 430Q1316 540 1290 630C1200 790 1060 925 885 951L400 800L225 487L68 245L75 208Z" fill="#7e8b90" />
      <path d="M131 105L889 -288L832 -185L75 208Z" fill="#70787b" />
      <Slot x={311} y={67} r={26} /><Slot x={611} y={-90} r={26} />

      <path d="M345 290L785 62L720 185L735 375L600 470L250 540L185 555L225 490L262 425Q252 400 270 378L300 355Q290 310 345 290Z" fill="#6f777a" />
      <path d="M185 555L225 490L262 425L270 395L385 335L400 350L600 325L710 460L650 492L415 552L250 545Z" fill="#6f777a" stroke="none" />
      <path d="M300 325Q320 290 345 290L357 292L320 355Q290 345 300 325Z" fill="#7e8b90" />
      <path d="M330 350L357 292M270 378L385 333Q370 355 385 362L400 350L590 250L718 182M270 378Q250 400 262 415" fill="none" />
      <Slot x={310} y={385} /><Slot x={325} y={397} /><Slot x={333} y={408} /><Slot x={296} y={448} /><Slot x={558} y={292} /><Slot x={660} y={225} /><Slot x={635} y={268} /><Slot x={428} y={382} r={9} />
      <path d="M785 62Q832 55 845 102L720 245L718 185Z" fill="#8b999e" />
      <path d="M785 62Q832 52 845 102L782 222L722 210Q735 170 785 62Z" fill="#96a5aa" />
      <path d="M845 102Q860 130 895 130Q915 132 922 155L922 190L883 192L815 315L783 285L738 212L782 222Z" fill="#8a989d" />
      <path d="M905 135L820 280M915 140L828 300M925 160L900 195" fill="none" />
      <path d="M738 212L782 222L820 280L783 285Z" fill="#7e8b90" />
      <path d="M718 182L783 285L733 378L640 440L600 325L660 295Z" fill="#78858a" />
      <path d="M783 285L783 315L715 450L700 460L733 378Z" fill="#96a5aa" />
      <path d="M783 278Q800 270 820 280L812 320Q795 325 780 312Z" fill="#b6c6cb" />
      <path d="M283 488L600 332" stroke="#2b3133" strokeWidth="27" strokeLinecap="round" />
      <path d="M283 488L600 332" stroke="#84939a" strokeWidth="22" strokeLinecap="round" /><path d="M283 486L600 330" stroke="#bccbd0" strokeWidth="6" />
      <path d="M602 335L690 452" stroke="#2b3133" strokeWidth="24" strokeLinecap="round" /><path d="M602 335L690 452" stroke="#8b999e" strokeWidth="18" strokeLinecap="round" /><path d="M600 338L686 452" stroke="#b6c6cb" strokeWidth="5" />
      <path d="M268 490L250 530Q262 548 275 542L298 498Q290 475 268 490Z" fill="#a3b2b7" />
      <path d="M392 465L590 358L612 440L600 468L415 552Z" fill="#98a7ac" />
      <path d="M392 465L415 552L375 492Z" fill="#8a989d" />
      <path d="M275 542L375 492" />
      <path d="M612 430L640 490L600 470Z" fill="#78858a" />

      <path d="M185 555L225 490L250 540Q262 548 275 542L375 492L415 552L640 455L645 490L823 542L775 775L903 805L838 1085L710 1050L685 1103L625 1135Q530 1080 440 1005Q310 900 250 835Q225 810 215 785Z" fill="#7e8b90" />
      <path d="M883 192L998 225L823 542L648 490L702 460Z" fill="#8f9ea3" />
      <path d="M998 225L945 475L783 770L772 776L823 542Z" fill="#70787b" />
      <path d="M990 240L940 480" fill="none" />
      <path d="M920 390V420M908 395V412M930 388V402M903 455V480M912 475V500M925 475V495M862 530V542M840 590V600M850 585V600M862 590V605M808 628V640M818 625V637M793 683V695" strokeWidth="4" />
      <path d="M1020 493Q1060 455 1095 490Q1110 520 1085 545L1050 550Z" fill="#84939a" />
      <path d="M1010 720Q1015 750 1035 775Q1045 800 1025 818Q990 830 970 800Z" fill="#8f9ea3" />
      <path d="M945 475L1010 493L1040 487L1070 497L1055 560L980 668L903 805L783 770Z" fill="#8f9ea3" />
      <path d="M995 510L1045 575L980 668L918 650Z" fill="#86949a" />
      <path d="M995 510L1055 525L1045 575" fill="#8f9ea3" />
      <path d="M1070 497L1055 575L1010 720L1000 800L885 950L860 1050L838 1085L903 805L980 668L1045 575L1055 525Z" fill="#70787b" />
      <path d="M978 668L968 712L1010 640M1010 720L1000 800L910 940M1012 725L990 800" fill="none" />
      <path d="M783 770C690 765 620 790 590 840C560 910 590 960 620 1000Q660 1040 698 1045L708 1022Q660 1010 630 980C590 930 580 870 610 820Q640 780 700 782Z" fill="#92a1a6" />
      <path d="M698 1045L685 1103L710 1050L708 1022Z" fill="#70787b" />
      <Bore id="b1" cx={538} cy={665} rx={117} ry={109} />
      <Bore id="b2" cx={452} cy={878} rx={106} ry={100} deep />
      <Bore id="b3" cx={740} cy={888} rx={112} ry={105} />
      <Hole cx={525} cy={530} r={12} /><Hole cx={385} cy={583} r={23} /><Hole cx={681} cy={583} r={23} /><Hole cx={729} cy={559} r={15} />
      <Hole cx={354} cy={684} r={28} /><Hole cx={701} cy={711} r={28} /><Hole cx={551} cy={801} r={12} /><Hole cx={619} cy={1071} r={28} />
      <path d="M370 572Q390 560 402 582M372 566Q395 570 403 590M668 575Q690 560 700 588M718 555Q730 550 740 565" fill="none" />
      <Hole cx={893} cy={286} r={16} ry={8} /><Hole cx={776} cy={475} r={16} ry={9} /><Hole cx={874} cy={322} r={7} ry={4} /><Hole cx={823} cy={414} r={7} ry={4} />

      <Arrow x1={690} y1={370} x2={525} y2={120} c="#23862a" c2="#7dbb79" k={14} h={62} />
      <Arrow x1={690} y1={370} x2={435} y2={508} c="#6d88e8" c2="#5874d8" k={12} />
      <Arrow x1={690} y1={370} x2={624} y2={500} c="#f07878" k={12} h={36} />
      <g><Arrow x1={712} y1={347} x2={638} y2={233} c="#e4dcdc" k={10} /><Arrow x1={712} y1={347} x2={580} y2={310} c="#f4f0f0" k={9} /><Arrow x1={712} y1={347} x2={600} y2={403} c="#c8c4c4" k={9} /><Arrow x1={712} y1={347} x2={684} y2={402} c="#f4f0f0" k={10} h={35} /><Arrow x1={700} y1={390} x2={685} y2={465} c="#b0a8a8" k={6} h={35} /></g>
      <g stroke="none" fontSize="40">
        <text x="536" y="109" fill="#3f9a3f">YM</text><text x="441" y="550" fill="#2f55ff">ZM</text><text x="629" y="534" fill="#e03434">XM</text>
        <g fill="#d4dadd"><text x="647" y="222">Y</text><text x="580" y="292">X</text><text x="601" y="450">Z</text><text x="686" y="436">X</text><text x="686" y="438">Z</text><text x="697" y="503">Y</text></g>
      </g>
    </g>

    <g fill="none" strokeWidth="2.500">
      <path d="M1030.500 458.500L1145 632" stroke="#00f" />
      <path d="M1303.500 435L1259 630" stroke="#00f" strokeDasharray="8 8.500" />
      <path d="M1144.500 631L1149 638M1258.500 629L1257.500 637" stroke="#00ffff" strokeWidth="3.500" />
      <path d="M1034 456.500Q1160 400 1303 434" stroke="#f00" strokeDasharray="7 6" />
    </g>
    <circle cx="1271.500" cy="573.500" r="5" fill="#f9a03f" />

    <path d="M1019 391L1043 433" stroke="#9a9c9d" strokeWidth="4.500" /><path d="M1018 391L1042 433" stroke="#c4c6c7" strokeWidth="1.500" />
    <path d="M1045 436L1051 446" stroke="#e8b800" strokeWidth="4.500" />
    <circle cx="1052.500" cy="448.500" r="4" fill="none" stroke="#f9a03f" strokeWidth="2" strokeDasharray="18 7" /><ellipse cx="1044" cy="434" rx="3.500" ry="3" fill="#222" />
    <g transform="translate(965 295.500) rotate(-29)">
      <path d="M-38 0L-38 105A38 13 0 0 0 38 105V0A38 13 0 0 1 -38 0Z" fill="url(#green)" />
      <ellipse cx="0" cy="0" rx="38" ry="13" fill="#7f9a74" stroke="#333632" strokeWidth="3" />
      <path d="M-38 105A38 13 0 0 1 38 105" fill="none" stroke="#5f7d56" strokeWidth="2.500" />
      <path d="M-38 105A38 13 0 0 0 38 105" fill="none" stroke="#333632" strokeWidth="3" />
      <ellipse cx="1" cy="104" rx="4" ry="3" fill="#5b7552" />
    </g>

    <g fill="none" stroke="#a8a8a8">
      <path d="M571 868L611 879.500L602 896L562 885ZM562 885L553.500 922L593 933L602 896M593 933L603 916L611 879.500" />
    </g>
    <Arrow x1={559} y1={894} x2={513} y2={880.500} c="#cf3030" w={4} h={18} k={4.500} />
    <Arrow x1={575} y1={928} x2={568} y2={964} c="#26702a" w={5} h={15} k={5} />
    <path d="M578 908L572 920" stroke="#0a46ff" strokeWidth="4" strokeLinecap="round" /><path d="M570 916L566 921V930L575 924V917Z" fill="#0a46ff" />
    <g fontSize="11"><text x="499" y="882" fill="#cf3030">X</text><text x="562" y="976" fill="#2a8a2a">Y</text><text x="560" y="937" fill="#4a5aff">Z</text></g>
  </svg>
);

/* ---------- operation navigator ---------- */
type Row = { w: number; guide: React.ReactNode; icon?: string; name: string; done?: boolean; on?: boolean };
const Box = ({ x }: { x: number }) => <g><rect x={x} y="5.500" width="8" height="8" fill="#fff" stroke="#c4c4c4" /><path d={`M${x + 1.500} 9.500H${x + 6.500}`} stroke="#111" /></g>;
const dot = { stroke: '#999', strokeDasharray: '1 1', fill: 'none' } as const;
const bang = <path d="M65 1V13M65 15V17" stroke="#f5a94a" strokeWidth="2" />;
const op = (last?: boolean) => <><path d={`M47.500 0V${last ? 10 : 20}M48 10.500H56`} {...dot} />{bang}</>;
const rows: Row[] = [
  { w: 19, guide: <><Box x={5.5} /><path d="M15 9.500H19" {...dot} /></>, name: 'GEOMETRY' },
  { w: 38, guide: <path d="M28.500 0V20M29 10.500H37" {...dot} />, icon: 'folder', name: '未用項' },
  { w: 39, guide: <><path d="M28.500 0V5M34 9.500H38" {...dot} /><Box x={24.5} /></>, icon: 'axis', name: '装夹-1' },
  { w: 57, guide: <path d="M47.500 0V20M48 10.500H56" {...dot} />, icon: 'work', name: 'WORKPIECE' },
  { w: 73, guide: op(), icon: 'cavity', name: 'CAVITY_MILL', done: true },
  { w: 73, guide: op(), icon: 'drilling', name: 'DRILLING', done: true },
  { w: 73, guide: op(true), icon: 'drilling1', name: 'DRILLING_1', done: true, on: true },
];

const rail = ['parts', 'bracket', 'opNav', 'grid', 'machTool', 'nodes', 'realEye', 'die', 'overlap', 'pmi', 'measure', 'info', 'web', 'clock', 'rainbow', 'wand', 'toolbox', 'machOut'];
const menu = ['首頁', '幾何體', '曲線', '分析', '視圖', '顯示', '選取', '組立件', '工具', '應用模組', '機床', '陎諾 V8.0'];

export default function App() {
  return (
    <Page>
      <Global /><Gradients />
      <Header>
        <TitleRow>
          <Quick>
            <Brand>NX</Brand><Sep />
            <Bare aria-label="save"><Icon n="save" /></Bare><Sep />
            <Bare aria-label="undo"><Icon n="undo" /><Tri $c="#fff" /></Bare><Sep />
            <Bare aria-label="cut"><Icon n="cut" /></Bare><Bare aria-label="copy"><Icon n="copy" /></Bare>
            <Bare aria-label="paste"><Icon n="paste" /></Bare><Bare aria-label="target"><Icon n="target" /></Bare><Sep />
            <Bare aria-label="output"><Icon n="exportS" /><Tri $c="#fff" /></Bare><Sep />
            <Bare aria-label="voice"><Icon n="mic" /></Bare><Sep />
            <Bare aria-label="touch"><Icon n="touch" /></Bare><Sep />
            <Bare aria-label="windows"><Icon n="windows" /></Bare>
            <WindowBtn><Icon n="window" />視窗<Tri $c="#fff" /></WindowBtn>
            <Bare aria-label="customize"><Icon n="custom" /></Bare>
          </Quick>
          <AppTitle>NX - 加工</AppTitle>
          <Win>
            <Siemens>SIEMENS</Siemens>
            <Bare aria-label="minimize"><Icon n="min" /></Bare><Bare aria-label="restore"><Icon n="restore" /></Bare><Bare aria-label="close"><Icon n="close" /></Bare>
          </Win>
        </TitleRow>
        <TabRow>
          <Tabs>
            <Tab $first>檔案(F)</Tab>
            {menu.map((m, i) => <Tab key={m} $on={i === 0}>{m}</Tab>)}
          </Tabs>
          <Tools>
            <Bare aria-label="like"><Icon n="smile" /></Bare><Bare aria-label="dislike"><Icon n="sad" /></Bare>
            <Search><input aria-label="search" placeholder="在此輸入以搜尋" /><Icon n="search" /></Search>
            <Bare aria-label="full screen"><Icon n="full" /></Bare><Bare aria-label="collapse"><Icon n="chevron" /></Bare>
            <Bare aria-label="help"><Icon n="help" /></Bare><Bare aria-label="alerts"><Icon n="bang" /></Bare>
          </Tools>
        </TabRow>
      </Header>

      <Ribbon>
        <Group w={218} t="插入">
          <B n="geometry" t="建立幾何體" /><B n="tool" t="建立刀具" /><B n="operation" t="建立工序" />
          <Col $ml={3}><Small aria-label="program"><Icon n="blocksPlus" s={24} /></Small><Small aria-label="method"><Icon n="wavesPlus" s={24} /></Small></Col>
        </Group>
        <Group w={234} t="預測工序" p={9} drop={false}>
          <B n="drill" t="鑽孔" /><B n="floor" t="底壁銑" /><B n="chamfer" t="孔倒斜銑" /><B n="spot" t="定心鑽" /><B n="face" t="平面銑" />
        </Group>
        <Group w={55} t="動作" p={9}><B n="props" t="屬性" d /></Group>
        <Group w={375} t="工序" p={9}>
          <B n="generate" t="產生刀軌" /><B n="inspect" t="檢查刀軌" /><B n="report" t="有效性報告" /><B n="verify" t="校驗刀軌" />
          <B n="simulate" t="機床模擬" /><B n="post" t="後處理" /><Col $ml={6} /><B n="moreOp" t="更多" d />
        </Group>
        <Group w={303} t="顯示" p={9}>
          <B n="showPath" t="顯示刀軌" on /><B n="pickPath" t="選取刀軌" on /><B n="pathReport" t="刀軌報告" />
          <Col $ml={3} $gap={6} $pt={1}><Small $on $h={32} aria-label="blank"><Icon n="blank" s={24} /></Small><Small aria-label="holder"><Icon n="holder" s={24} /></Small></Col>
          <Col $end><Small $w={12} aria-label="holder options"><Tri /></Small></Col>
          <Col $ml={10} $gap={0} $pt={3}><Small $h={23} aria-label="up"><Icon n="up" s={24} /></Small><Small $h={23} aria-label="levels"><Icon n="layers" s={24} /></Small><Small $h={23} aria-label="down"><Icon n="down" s={24} /></Small></Col>
          <Col $ml={3} /><B n="moreView" t="更多" d />
        </Group>
        <Group w={215} t="刀軌動畫" p={8}>
          <PlayGrid>
            <Round label="play back" d="M15.500 7V17L6.500 12Z" /><span /><Round label="play" d="M8.500 7V17L17.500 12Z" /><span />
            <Round label="step back" d="M17 7V17L8.500 12ZM6.500 7V17" /><button aria-label="step back options"><Tri /></button>
            <Round label="step" d="M7 7V17L15.500 12ZM17.500 7V17" /><button aria-label="step options"><Tri /></button>
          </PlayGrid>
          <Speed><input type="range" min="0" max="100" defaultValue="44" />速度</Speed>
        </Group>
        <Group w={165} t="IPW"><B n="showIpw" t="顯示 IPW" /><B n="anaIpw" t="分析 IPW" d /><Col $ml={2} /><B n="moreIpw" t="更多" d /></Group>
        <Group w={64} t="2D IP..." p={8}>
          <IpwGrid>
            {[['#fff', ''], [CY, ''], ['#fff', 'l'], [CY, 'l'], ['#fff', 'r'], [CY, 'r']].map(([c, t], i) => (
              <Bare key={i} aria-label="2D IPW"><svg width="18" height="19" viewBox="0 0 18 19"><Cone c={c} t={t} /></svg></Bare>
            ))}
          </IpwGrid>
        </Group>
        <Group w={185} t="特徵"><B n="findFeat" t="搜尋特徵" /><B n="makeFeat" t="建立特徵工藝" /><Col $ml={6} /><B n="moreFeat" t="更多" d /></Group>
        <End><Tri /></End>
      </Ribbon>

      <Bar>
        <MenuBtn><Icon n="menu" /><span>功能表(<u>M</u>)</span><Tri /></MenuBtn>
        <Sep $h={20} $c="#dcdcdc" />
        <Combo $w={148}><select aria-label="filter type"><option>刀軌</option></select><Tri /></Combo>
        <Bare aria-label="filter"><Icon n="filter" /></Bare>
        <Combo $w={155}><select aria-label="scope"><option>整個組立件</option></select><Tri /></Combo>
        <Sep $h={20} $c="#dcdcdc" />
        <ToolSetRow>
          <ToolBtn $on aria-label="MCS"><Icon n="mcs" /></ToolBtn><ToolBtn aria-label="axes"><Icon n="csysEye" /></ToolBtn><ToolBtn aria-label="hide"><Icon n="noEye" /></ToolBtn>
          <Sep $h={20} $c="#dcdcdc" />
          {['ruler', 'wire', 'orange', 'stack', 'csysBox', 'plusInfo'].map(n => <ToolBtn key={n} aria-label={n}><Icon n={n} /></ToolBtn>)}
          <Sep $h={20} $c="#dcdcdc" />
        </ToolSetRow>
        <Tri />
      </Bar>

      <Main>
        <Rail>
          <RailBtn $first aria-label="settings"><Icon n="gear" /></RailBtn>
          {rail.map(n => <RailBtn key={n} $on={n === 'opNav'} aria-label={n}><Icon n={n} s={24} /></RailBtn>)}
        </Rail>
        <Navigator>
          <NavHead><Icon n="opNav16" /><h2>工序導覽器</h2><button aria-label="maximize" /></NavHead>
          <NavTools>
            <NavBtn aria-label="program view"><Icon n="blocksTree" s={24} /></NavBtn><NavBtn aria-label="tool view"><Icon n="toolTree" s={24} /></NavBtn>
            <NavBtn $on aria-label="geometry view"><Icon n="geomTree" s={24} /></NavBtn><NavBtn aria-label="method view"><Icon n="wavesTree" s={24} /></NavBtn>
            <NavBtn $box aria-label="add"><Icon n="winPlus" s={24} /></NavBtn><NavBtn $box aria-label="remove"><Icon n="winX" s={24} /></NavBtn>
          </NavTools>
          <TableBox>
            <Clip>
              <Grid>
                <colgroup><col width="200" /><col width="50" /><col width="50" /><col /></colgroup>
                <thead><tr><th>標題</th><th>刀軌</th><th>IPW</th><th>通道</th></tr></thead>
                <tbody>
                  {Array.from({ length: 37 }, (_, i) => {
                    const r = rows[i];
                    return (
                      <tr key={i}>
                        <td>{r && (
                          <NameCell $on={r.on}>
                            <svg width={r.w} height="20" viewBox={`0 0 ${r.w} 20`} aria-hidden="true">{r.guide}</svg>
                            {r.icon && <Icon n={r.icon} />}<span>{r.name}</span>
                          </NameCell>
                        )}</td>
                        <Cell $on={r?.on}>{r?.done && <Icon n="tick" />}</Cell>
                        <Cell $on={r?.on}>{r?.done && <Icon n="cross" />}</Cell>
                        <Cell $on={r?.on} />
                      </tr>
                    );
                  })}
                </tbody>
              </Grid>
            </Clip>
            <HScroll><i /></HScroll>
          </TableBox>
        </Navigator>
        <Strip>
          <svg width="26" height="57" viewBox="0 0 26 57" aria-hidden="true">
            <path d="M1 25L24 2" stroke={CY} strokeWidth="1.200" /><path d="M1 56H10Q17 56 21 50" fill="none" stroke={CY} strokeWidth="1.400" /><path d="M21 50Q24 46 24 41V32" fill="none" stroke={OR} strokeWidth="1.400" />
          </svg>
          <StripSep /><Back />
        </Strip>
        <View>
          <DocTabs>
            <DocTab><Icon n="discover" />發現中心</DocTab>
            <DocTab><Icon n="setup" />model1.prt<Icon n="edit" s={11} /></DocTab>
            <DocTab $on><Icon n="setup" />多軸孔加工.prt<Icon n="edit" s={11} /><Icon n="x" s={9} /></DocTab>
          </DocTabs>
          <Canvas><Model /></Canvas>
        </View>
      </Main>
      <Status>UG<span>爱好者论坛</span> WWW.UGSNX.COM</Status>
      <Taskbar><i /></Taskbar>
    </Page>
  );
}
